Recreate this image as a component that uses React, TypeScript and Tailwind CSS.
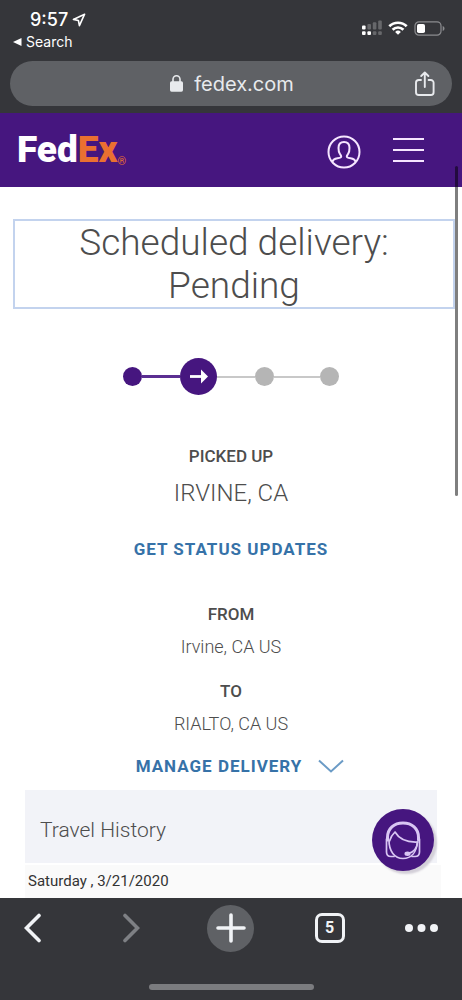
import { Fragment } from "react";

const steps = ["done", "current", "todo", "todo"];

function StatusBar() {
  return (
    <div className="flex justify-between pl-3 pr-[17px] pt-2 text-white font-['Inter',sans-serif]">
      <div>
        <div className="flex items-center gap-1 pl-[18px] text-lg leading-6 font-medium">
          9:57
          <svg className="w-[14px] h-[14px]" viewBox="0 0 14 14" fill="none" stroke="currentColor" strokeWidth="1.6" strokeLinejoin="round">
            <path d="M12.6 1.2 1.4 6.4l5 1.1 1 5.1z" />
          </svg>
        </div>
        <a href="#search" className="flex items-center gap-1 text-sm leading-5">
          <svg className="w-[10px] h-2" viewBox="0 0 10 8" fill="currentColor">
            <path d="M1 4 9.5 0v8z" />
          </svg>
          Search
        </a>
      </div>

      <div className="flex items-center gap-[6px] h-[40px]">
        <svg className="w-5 h-4" viewBox="0 0 20 16" fill="#fff">
          <rect x="0" y="5.5" width="3.6" height="4" rx="1" />
          <rect x="5.4" y="4" width="3.6" height="5.5" rx="1" opacity=".25" />
          <rect x="10.8" y="2.3" width="3.6" height="7.2" rx="1" opacity=".25" />
          <rect x="16.2" y="0.6" width="3.6" height="8.9" rx="1" opacity=".25" />
          <rect x="0" y="11.2" width="3.6" height="3.8" rx="1" />
          <rect x="5.4" y="11.2" width="3.6" height="3.8" rx="1" />
          <rect x="10.8" y="11.2" width="3.6" height="3.8" rx="1" opacity=".25" />
          <rect x="16.2" y="11.2" width="3.6" height="3.8" rx="1" opacity=".25" />
        </svg>
        <svg className="w-[20px] h-[14px]" viewBox="0 0 20 14" fill="none" stroke="#fff" strokeWidth="2.7">
          <path d="M1.3 5.3a12.4 12.4 0 0 1 17.4 0" />
          <path d="M4.6 8.7a7.7 7.7 0 0 1 10.8 0" />
          <path d="m10 13.8-2.9-2.9a4.1 4.1 0 0 1 5.8 0z" fill="#fff" stroke="none" />
        </svg>
        <svg className="w-[31px] h-[15px]" viewBox="0 0 31 15" fill="none">
          <rect x="1" y=".8" width="26" height="13.4" rx="4" stroke="#8b8c8f" strokeWidth="1.2" />
          <rect x="3" y="3" width="8" height="9" rx="1.8" fill="#fff" />
          <path d="M28.7 5v5c1.2-.4 1.8-1.4 1.8-2.5s-.6-2.1-1.8-2.5z" fill="#8b8c8f" />
        </svg>
      </div>
    </div>
  );
}

function AddressBar() {
  return (
    <div className="mx-[10px] mt-[9px] mb-[7px] h-[45px] rounded-full bg-[#5f6165] flex items-center px-4 text-[#e8eaed]">
      <span className="w-6" />
      <button className="flex-1 flex items-center justify-center gap-[11px] text-[20px] leading-6 font-['Inter',sans-serif]">
        <svg className="w-[13px] h-[17px]" viewBox="0 0 13 17" fill="currentColor">
          <rect x="0" y="6.3" width="13" height="10.4" rx="1.6" />
          <path d="M3 7V4.3a3.5 3.5 0 0 1 7 0V7" fill="none" stroke="currentColor" strokeWidth="1.6" />
        </svg>
        fedex.com
      </button>
      <button aria-label="Share">
        <svg className="w-[22px] h-[26px]" viewBox="0 0 22 26" fill="none" stroke="currentColor" strokeWidth="1.9" strokeLinecap="round" strokeLinejoin="round">
          <path d="M7 9H4.800A2.800 2.800 0 0 0 2 11.800v9.400A2.800 2.800 0 0 0 4.800 24h12a2.800 2.800 0 0 0 2.800-2.800v-9.400A2.800 2.800 0 0 0 16.800 9h-2.200" />
          <path d="M10.800 16V1.700M7.200 5l3.600-3.500L14.400 5" />
        </svg>
      </button>
    </div>
  );
}

function SiteHeader() {
  return (
    <header className="h-[74px] bg-[#46167f] flex items-center justify-between pl-[17px] pr-[37px]">
      <a href="#home" className="flex items-end text-white">
        <span className="text-[37px] leading-10 font-black">
          Fed<span className="text-[#ea7030]">Ex</span>
        </span>
        <span className="text-[11px] leading-4 text-[#ea7030]">®</span>
      </a>
      <div className="flex items-center gap-8 text-[#f6e6ff]">
        <button aria-label="Account" className="pt-1">
          <svg className="w-[34px] h-[34px]" viewBox="0 0 34 34" fill="none" stroke="currentColor" strokeWidth="2">
            <circle cx="17" cy="17" r="15.5" />
            <path d="M5.500 27c.3-2 2.500-3.300 5-3.700 2.600-.4 3.700-.6 3.700-1.800 0-1-.6-1.500-1.400-2.700-.9-1.400-1.300-3-1.300-5.800 0-4 1.900-6 5.500-6s5.500 2 5.500 6c0 2.800-.4 4.400-1.300 5.800-.8 1.200-1.400 1.700-1.400 2.700 0 1.200 1.100 1.400 3.700 1.800 2.500.4 4.700 1.700 5 3.700" />
          </svg>
        </button>
        <button aria-label="Menu">
          <svg className="w-8 h-[26px]" viewBox="0 0 32 26" stroke="currentColor" strokeWidth="2">
            <path d="M0 2h31M0 13h31M0 24h31" />
          </svg>
        </button>
      </div>
    </header>
  );
}

function Progress() {
  return (
    <div className="mt-[49px] flex items-center justify-center">
      {steps.map((step, i) => (
        <Fragment key={i}>
          {i > 0 && (
            <span
              className={
                step === "current"
                  ? "w-[38px] h-[3px] bg-[#5b2f92]"
                  : i === 2
                    ? "w-[38px] h-[2px] bg-[#c8c8c8]"
                    : "w-[46px] h-[2px] bg-[#c8c8c8]"
              }
            />
          )}
          {step === "current" ? (
            <span className="w-[37px] h-[37px] rounded-full bg-[#46167f] flex items-center justify-center">
              <svg className="w-5 h-4" viewBox="0 0 20 16" fill="none" stroke="#fff" strokeWidth="2.8">
                <path d="M1 7.500h13" />
                <path d="M12 .5 19 7.500l-7 7z" fill="#fff" stroke="none" />
              </svg>
            </span>
          ) : (
            <span className={`w-[19px] h-[19px] rounded-full ${step === "done" ? "bg-[#46167f]" : "bg-[#b5b5b5]"}`} />
          )}
        </Fragment>
      ))}
    </div>
  );
}

function BottomBar() {
  return (
    <nav className="h-[102px] shrink-0 bg-[#35363a] text-[#f1f3f6]">
      <div className="flex items-center justify-between h-[60px] px-6">
        <button aria-label="Back" className="w-[30px]">
          <svg className="w-[18px] h-[30px]" viewBox="0 0 18 30" fill="none" stroke="currentColor" strokeWidth="3.6" strokeLinecap="round">
            <path d="M15 2.500 2.500 15 15 27.500" />
          </svg>
        </button>
        <button aria-label="Forward" className="w-8 flex justify-center text-[#7e8084]">
          <svg className="w-[18px] h-[30px]" viewBox="0 0 18 30" fill="none" stroke="currentColor" strokeWidth="3.6" strokeLinecap="round">
            <path d="m3 2.500 12.500 12.500L3 27.500" />
          </svg>
        </button>
        <button aria-label="New tab" className="w-[47px] h-[47px] rounded-full bg-[#5f6165] flex items-center justify-center">
          <svg className="w-[30px] h-[30px]" viewBox="0 0 30 30" stroke="currentColor" strokeWidth="3.6" strokeLinecap="round">
            <path d="M15 2v26M2 15h26" />
          </svg>
        </button>
        <button className="w-[30px] h-[30px] rounded-[7px] border-3 border-current text-base leading-6 font-bold">5</button>
        <button aria-label="More">
          <svg className="w-[33px] h-2" viewBox="0 0 33 8" fill="currentColor">
            <circle cx="4" cy="4" r="4" />
            <circle cx="16.5" cy="4" r="4" />
            <circle cx="29" cy="4" r="4" />
          </svg>
        </button>
      </div>
      <div className="mt-[26px] mx-auto w-[165px] h-[6px] rounded-full bg-[#7b7c7f]" />
    </nav>
  );
}

export default function App() {
  return (
    <div className="relative h-screen flex flex-col overflow-hidden bg-white text-[#4d4d4d] font-['Roboto',sans-serif]">
      <div className="shrink-0 bg-[#35363a]">
        <StatusBar />
        <AddressBar />
      </div>
      <SiteHeader />

      <main className="relative flex-1 min-h-0 overflow-hidden text-center">
        <h1 className="mt-8 ml-[13px] mr-[7px] border-2 border-[#c3d3ee] text-[37px] leading-[43px] font-light">
          Scheduled delivery:
          <br />
          Pending
        </h1>

        <Progress />

        <section className="mt-[49px]">
          <h2 className="text-[17px] leading-6 font-medium">PICKED UP</h2>
          <p className="mt-[9px] text-2xl leading-8 font-light">IRVINE, CA</p>
          <a href="#updates" className="mt-7 block text-[17px] leading-6 font-bold tracking-[1px] text-[#3672a8]">
            GET STATUS UPDATES
          </a>
        </section>

        <dl className="mt-[41px] leading-6">
          <dt className="text-[17px] font-medium">FROM</dt>
          <dd className="mt-[9px] text-lg leading-6 font-light">Irvine, CA US</dd>
          <dt className="mt-5 text-[17px] font-medium">TO</dt>
          <dd className="mt-[9px] text-lg leading-6 font-light">RIALTO, CA US</dd>
        </dl>

        <button className="mt-[18px] ml-[18px] inline-flex items-center gap-4 text-[17px] leading-6 font-bold tracking-[1px] text-[#3672a8]">
          MANAGE DELIVERY
          <svg className="w-[26px] h-[14px]" viewBox="0 0 26 14" fill="none" stroke="#6b9bc6" strokeWidth="2">
            <path d="m1 1.500 12 11 12-11" />
          </svg>
        </button>

        <section className="ml-[25px] mr-[21px] mt-[11px] text-left">
          <h2 className="mr-1 h-[73px] pt-7 pl-[15px] bg-[#f2f3f8] text-[21px] leading-6 font-light">Travel History</h2>
          <p className="mt-[2px] pl-[3px] pt-1 h-12 bg-[#fafafa] text-[15px] leading-6 text-[#333]">Saturday , 3/21/2020</p>
        </section>

        {/* Floating chat button */}
        <button
          aria-label="Chat with support"
          className="absolute right-7 bottom-[27px] w-[62px] h-[62px] rounded-full bg-[#46167f] shadow-[3px_3px_2px_#d3cfd8] flex items-center justify-center"
        >
          <svg className="w-[38px] h-10" viewBox="0 0 38 40" fill="none" stroke="#d9c6f3" strokeWidth="1.7" strokeLinecap="round" strokeLinejoin="round">
            <path d="M3.500 20V17.500C3.500 8.500 10 3 19 3s15.500 5.500 15.500 14.500V20" strokeWidth="3" />
            <path d="M2.500 19v13c0 3 1.500 4.500 4.500 4.500h3" />
            <path d="M35.500 19v13c0 3-1.500 4.500-4.500 4.500h-3" />
            <path d="M5.500 21c1-3.500 2.800-6.500 5.500-9 3.500 6 11 10.500 22.500 10" />
            <path d="M5 20.500C5 31 10.500 38.500 19 38.500c8.500 0 13.500-6.500 14.500-16.500" />
            <path d="M33.500 22c-.5 6-3.500 10-9 11.500" />
            <ellipse cx="23.500" cy="33.800" rx="2.200" ry="1.400" fill="#d9c6f3" />
          </svg>
        </button>
      </main>

      <BottomBar />

      {/* Page scroll thumb */}
      <div className="absolute right-1 top-[166px] w-[3px] h-[330px] rounded-full bg-black/50" />
    </div>
  );
}
